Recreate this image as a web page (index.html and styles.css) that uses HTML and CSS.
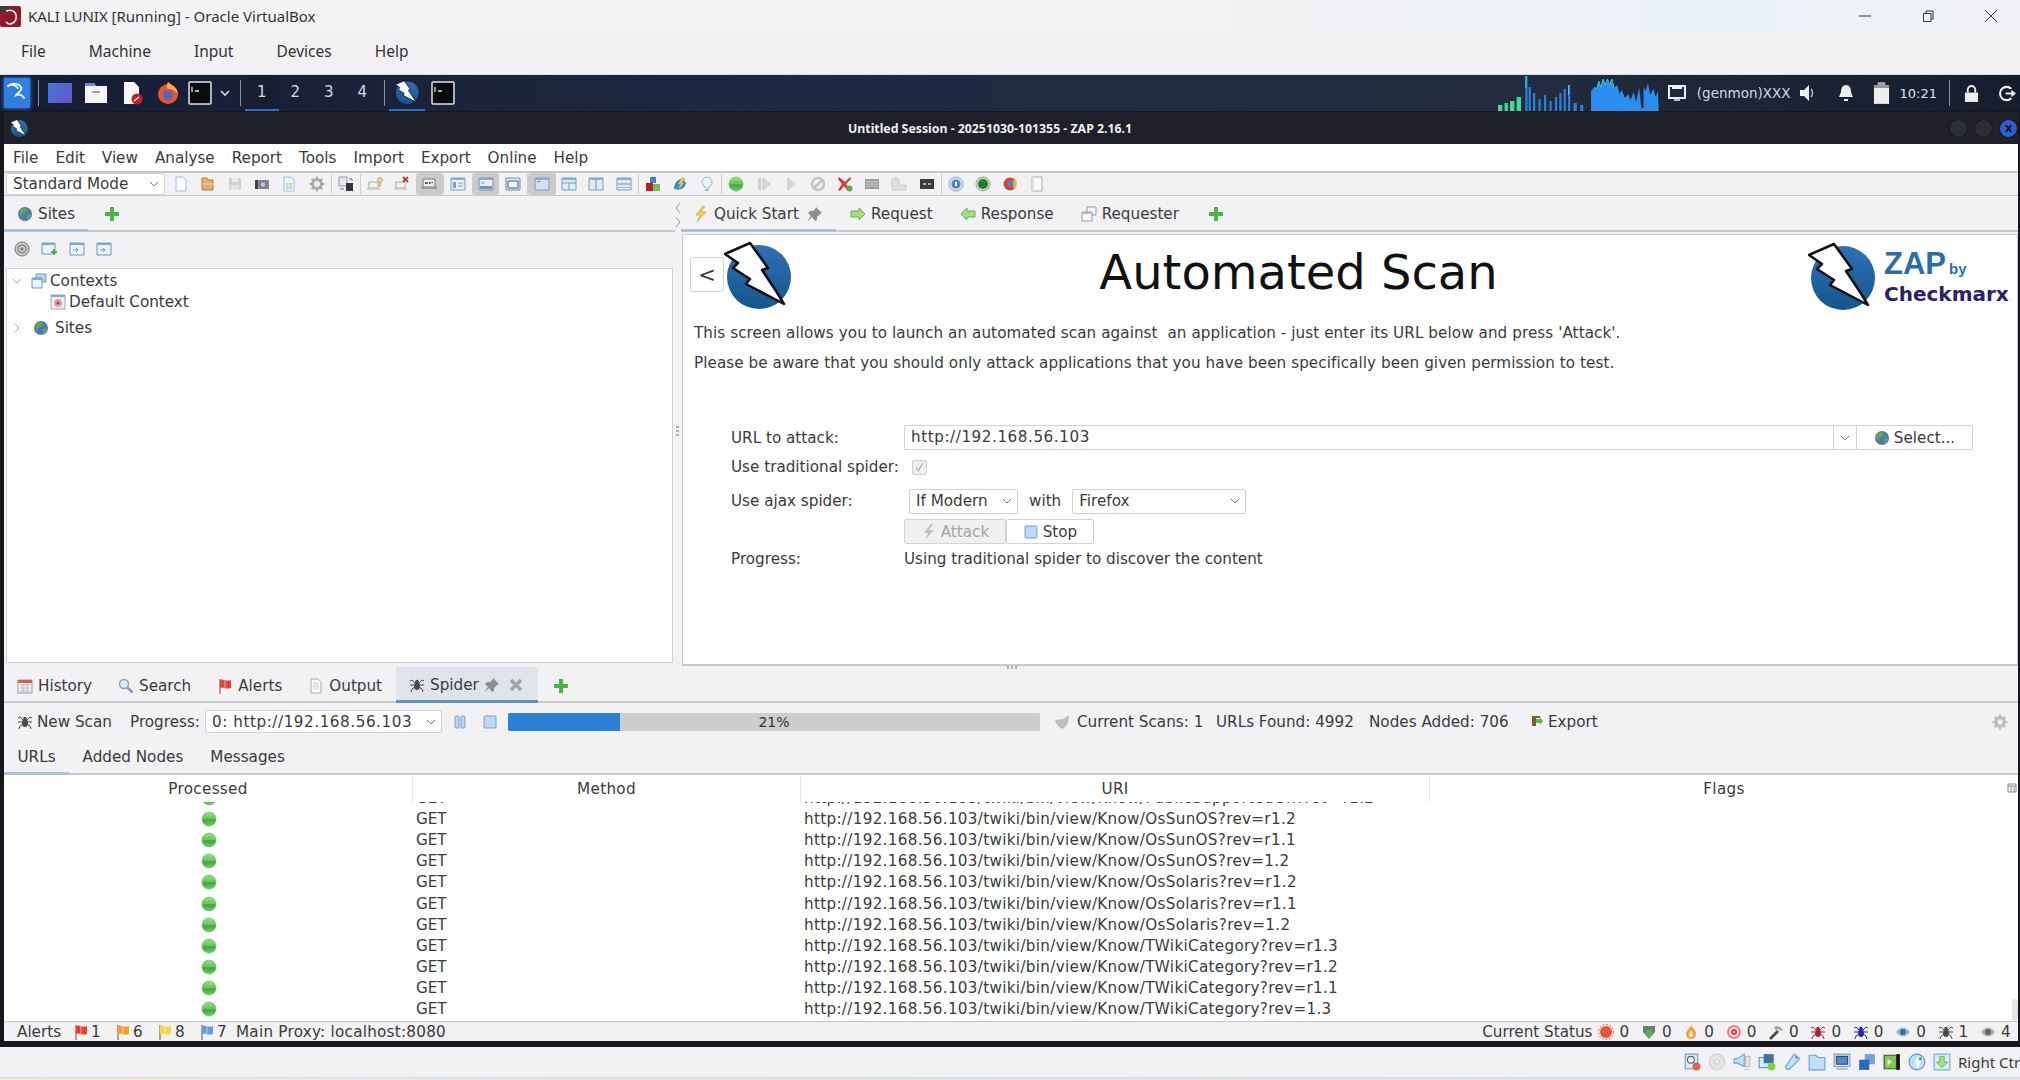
FILE: index.html
```html
<!DOCTYPE html>
<html lang="en">
<head>
<meta charset="UTF-8">
<title>KALI LUNIX [Running] - Oracle VirtualBox</title>
<link rel="stylesheet" href="styles.css">
</head>
<body>
<!-- icon sheet -->
<svg class="sheet" xmlns="http://www.w3.org/2000/svg">
  <defs>
    <linearGradient id="gDot" x1="0" y1="0" x2="0" y2="1"><stop offset="0" stop-color="#9be08a"/><stop offset=".5" stop-color="#62c455"/><stop offset=".55" stop-color="#3fa63c"/><stop offset="1" stop-color="#6fd064"/></linearGradient>
    <linearGradient id="gZap" x1="0" y1="0" x2="0" y2="1"><stop offset="0" stop-color="#2f6fb4"/><stop offset="1" stop-color="#14568f"/></linearGradient>
  </defs>
  <symbol id="globe" viewBox="0 0 16 16"><circle cx="8" cy="8" r="7" fill="#4f79b5"/><path d="M4 3l4-1 2 2-2 3-3 1-1 3-2-3zM10 9l3-1 1 2-3 4-1-2z" fill="#5ea94f"/></symbol>
  <symbol id="plus" viewBox="0 0 16 16"><path d="M6 1h4v5h5v4h-5v5H6v-5H1V6h5z" fill="#4cb53f"/></symbol>
  <symbol id="page" viewBox="0 0 16 16"><path d="M3 1h7l3 3v11H3z" fill="#fff" stroke="#9dbbdc"/></symbol>
  <symbol id="folder" viewBox="0 0 16 16"><path d="M2 2h5l1 2h5v10H2z" fill="#e6ad6e" stroke="#b97a3a"/><path d="M2 8h12" stroke="#f5cf9f"/></symbol>
  <symbol id="save" viewBox="0 0 16 16"><path d="M2 2h12v12H2z" fill="#cfcfcf"/><path d="M5 2h6v4H5z" fill="#eee"/><path d="M4 9h8v5H4z" fill="#e3e3e3"/></symbol>
  <symbol id="camera" viewBox="0 0 16 16"><path d="M1 4h14v9H1z" fill="#8a8a8e"/><path d="M1 4h3v9H1z" fill="#444"/><circle cx="9" cy="8.500" r="3.200" fill="#b9c2db" stroke="#5a5f78"/></symbol>
  <symbol id="sheetdoc" viewBox="0 0 16 16"><path d="M3 1h7l3 3v11H3z" fill="#eef6fb" stroke="#9dbbdc"/><path d="M5 7h6v6H5z" fill="#a9d3a3"/><path d="M5 9h6M5 11h6M8 7v6" stroke="#fff" stroke-width=".6"/></symbol>
  <symbol id="gear" viewBox="0 0 16 16"><circle cx="8" cy="8" r="4.500" fill="none" stroke="#a9a9a9" stroke-width="3"/><path d="M8 .5v15M.5 8h15M2.700 2.700l10.600 10.600M13.300 2.700L2.700 13.300" stroke="#a9a9a9" stroke-width="2"/><circle cx="8" cy="8" r="3" fill="#eee"/></symbol>
  <symbol id="compare" viewBox="0 0 16 16"><path d="M1 1h8v9H1z" fill="#e8e8e8" stroke="#999"/><path d="M8 7h7v8H8z" fill="#333"/><path d="M11 3h3v2M2 13h4" stroke="#4a6fb5" fill="none"/></symbol>
  <symbol id="lapBulb" viewBox="0 0 16 16"><path d="M2 6h9v6H2z" fill="#f2f2f2" stroke="#a8a8a8"/><path d="M0 12h13v2H0z" fill="#cdcdcd"/><circle cx="13" cy="4" r="2.400" fill="#f3dd8a" stroke="#a58d3e" stroke-width=".6"/><path d="M12.500 6h1v5h-1z" fill="#a58d3e"/></symbol>
  <symbol id="lapX" viewBox="0 0 16 16"><path d="M2 6h9v6H2z" fill="#f2f2f2" stroke="#a8a8a8"/><path d="M0 12h13v2H0z" fill="#cdcdcd"/><path d="M9 1l5 5M14 1L9 6" stroke="#c23b3b" stroke-width="2"/></symbol>
  <symbol id="lapOn" viewBox="0 0 16 16"><path d="M2 3h12v8H2z" fill="#eee" stroke="#777"/><path d="M0 11h16v2H0z" fill="#9a9a9a"/><path d="M4 6h3v2H4z" fill="#2f8f3c"/><path d="M8 6h1.500v2H8zM10.500 6H12v1h-1.500z" fill="#444"/></symbol>
  <symbol id="lay1" viewBox="0 0 16 16"><path d="M1 2h14v12H1z" fill="#e8eef5" stroke="#7f9dbd"/><path d="M1 2h14v2H1z" fill="#8fabc9"/><path d="M3 6h3v6H3z" fill="#7f9dbd"/><path d="M8 7h5M8 10h5" stroke="#7f9dbd"/></symbol>
  <symbol id="lay2" viewBox="0 0 16 16"><path d="M1 2h14v12H1z" fill="#e8eef5" stroke="#6f8fb0"/><path d="M1 2h14v2H1z" fill="#8fabc9"/><path d="M2 10h12v3H2z" fill="#6f97c0"/><path d="M3 7h4" stroke="#7f9dbd"/></symbol>
  <symbol id="lay3" viewBox="0 0 16 16"><path d="M1 2h14v12H1z" fill="#dfe8f2" stroke="#6f8fb0"/><path d="M3 5h10v7H3z" fill="#f0f4f8" stroke="#3d6188"/></symbol>
  <symbol id="lay4" viewBox="0 0 16 16"><path d="M1 2h14v12H1z" fill="#cfe2f5" stroke="#7f9dbd"/><path d="M1 2h14v2H1z" fill="#8fabc9"/><path d="M3 5h4v1H3z" fill="#7f9dbd"/></symbol>
  <symbol id="lay5" viewBox="0 0 16 16"><path d="M1 2h14v12H1z" fill="#dcebf8" stroke="#7f9dbd"/><path d="M1 2h14v2H1z" fill="#8fabc9"/><path d="M8 7v7M1 7h14" stroke="#7f9dbd"/></symbol>
  <symbol id="lay6" viewBox="0 0 16 16"><path d="M1 2h14v12H1z" fill="#dcebf8" stroke="#7f9dbd"/><path d="M1 2h14v2H1z" fill="#8fabc9"/><path d="M7 4h2v10H7z" fill="#a7bdd4"/></symbol>
  <symbol id="lay7" viewBox="0 0 16 16"><path d="M1 2h14v12H1z" fill="#dcebf8" stroke="#7f9dbd"/><path d="M1 2h14v2H1z" fill="#8fabc9"/><path d="M1 7h14v2H1zM1 11h14v1H1z" fill="#a7bdd4"/></symbol>
  <symbol id="blocks" viewBox="0 0 16 16"><path d="M5 1h6v6H5z" fill="#3d82b8"/><path d="M1 7h7v8H1z" fill="#b4202c"/><path d="M8 8h7v7H8z" fill="#7cbb52"/></symbol>
  <symbol id="hud" viewBox="0 0 16 16"><path d="M2 13c0-6 4-11 11-11-1 2-1 3 1 5-1 5-5 8-12 6z" fill="#3d8bd0"/><path d="M10 1l3 1-3 5 2 0-5 6 1-5-2 0z" fill="#e6c442"/></symbol>
  <symbol id="bulb" viewBox="0 0 16 16"><path d="M8 1a5 5 0 0 1 3 9l-1 2H6l-1-2a5 5 0 0 1 3-9z" fill="#e9f2fa" stroke="#9fb7cc"/><path d="M6 13h4v2H6z" fill="#b6b6b6"/></symbol>
  <symbol id="dot" viewBox="0 0 16 16"><circle cx="8" cy="8" r="7" fill="url(#gDot)" stroke="#5eb455" stroke-width=".6"/></symbol>
  <symbol id="step" viewBox="0 0 16 16"><path d="M2 2h3v12H2z" fill="#cfcfcf"/><path d="M7 2l7 6-7 6z" fill="#d9d9d9" stroke="#c4c4c4"/></symbol>
  <symbol id="play" viewBox="0 0 16 16"><path d="M4 1l9 7-9 7z" fill="#d4d4d4"/></symbol>
  <symbol id="ban" viewBox="0 0 16 16"><circle cx="8" cy="8" r="6" fill="none" stroke="#c4c4c4" stroke-width="2.500"/><path d="M4 12l8-8" stroke="#c4c4c4" stroke-width="2.500"/></symbol>
  <symbol id="xplus" viewBox="0 0 16 16"><path d="M2 1l6 5 5-5 1 2-5 5 5 6-3 1-4-5-4 5-2-1 4-6-4-5z" fill="#d63a33"/><circle cx="12.500" cy="12.500" r="3" fill="#55b548"/></symbol>
  <symbol id="grid" viewBox="0 0 16 16"><path d="M1 3h14v10H1z" fill="#9c9c9c"/><path d="M3 5v6M5 5v6M7 5v6M9 5v6M11 5v6M13 5v6" stroke="#e8e8e8" stroke-dasharray="1.500 1"/></symbol>
  <symbol id="lockdim" viewBox="0 0 16 16"><path d="M1 3h7v6h7v5H1z" fill="#e0e0e0" stroke="#c9c9c9"/><path d="M3 1h3v2H3z" fill="#d4d4d4"/></symbol>
  <symbol id="darkbox" viewBox="0 0 16 16"><path d="M1 3h14v10H1z" fill="#3c3c3c"/><path d="M4 7h3v2H4zM9 7h3v2H9z" fill="#aaa"/></symbol>
  <symbol id="help" viewBox="0 0 16 16"><circle cx="8" cy="8" r="7" fill="#cfe0f2" stroke="#8aa8c9"/><circle cx="8" cy="8" r="4.500" fill="#4b84c2"/><path d="M7 6h2v4H7z" fill="#fff"/></symbol>
  <symbol id="rec" viewBox="0 0 16 16"><circle cx="8" cy="8" r="7" fill="#cfd3cf" stroke="#9ba09b"/><circle cx="8" cy="8" r="5" fill="#1f7f2a"/></symbol>
  <symbol id="fox" viewBox="0 0 16 16"><circle cx="8" cy="8" r="6.500" fill="#c9492f"/><circle cx="9" cy="8" r="3.500" fill="#5d7fc6"/><path d="M12 1c3 3 3 9 0 13-1-3-1-8 0-13z" fill="#f2b33c"/></symbol>
  <symbol id="note" viewBox="0 0 16 16"><path d="M3 1h10v14H3z" fill="#fafafa" stroke="#a9a9a9"/><path d="M3 1h2v14H3z" fill="#dcdcdc"/></symbol>
  <symbol id="target" viewBox="0 0 16 16"><circle cx="8" cy="8" r="7" fill="#c7c7c7" stroke="#777"/><circle cx="8" cy="8" r="4" fill="none" stroke="#777"/><circle cx="8" cy="8" r="1.500" fill="#777"/></symbol>
  <symbol id="winAdd" viewBox="0 0 16 16"><path d="M1 2h13v11H1z" fill="#eaf2fa" stroke="#6c9ac4"/><path d="M1 2h13v2H1z" fill="#7fa8cf"/><path d="M10 10h2V8h2v2h2v2h-2v2h-2v-2h-2z" fill="#4cb53f"/></symbol>
  <symbol id="winIn" viewBox="0 0 16 16"><path d="M1 2h14v12H1z" fill="#eaf2fa" stroke="#6c9ac4"/><path d="M1 2h14v2H1z" fill="#7fa8cf"/><path d="M4 9h5M7 7l2 2-2 2" stroke="#6c9ac4" fill="none"/></symbol>
  <symbol id="winStack" viewBox="0 0 16 16"><path d="M5 1h10v8H5z" fill="#b9d4ee" stroke="#6c9ac4"/><path d="M1 5h10v10H1z" fill="#eef4fa" stroke="#6c9ac4"/><path d="M1 5h10v2H1z" fill="#7fa8cf"/></symbol>
  <symbol id="winGrey" viewBox="0 0 16 16"><path d="M6 1h9v8H6z" fill="#f4f4f4" stroke="#999"/><path d="M1 6h10v9H1z" fill="#fafafa" stroke="#999"/><path d="M1 6h10v2H1z" fill="#bbb"/></symbol>
  <symbol id="ctxTarget" viewBox="0 0 16 16"><path d="M1 1h14v14H1z" fill="#eef2f6" stroke="#8fa9c4"/><path d="M1 1h14v2H1z" fill="#8fa9c4"/><circle cx="8" cy="9" r="4" fill="#e89aa0"/><circle cx="8" cy="9" r="1.500" fill="#c43c48"/></symbol>
  <symbol id="bolt" viewBox="0 0 16 16"><path d="M10 0L3 9h4l-3 7 9-10H8l4-6z" fill="#f3ce48" stroke="#c89f2a" stroke-width=".6"/></symbol>
  <symbol id="boltOff" viewBox="0 0 16 16"><path d="M10 0L3 9h4l-3 7 9-10H8l4-6z" fill="#bdbdbd"/></symbol>
  <symbol id="pin" viewBox="0 0 16 16"><path d="M9 1l6 6-2 1-3 3 0 3-2 1-3-4-4 4 0-1 3-4-3-3 2-2 3 0 3-3z" fill="#8e8e8e"/></symbol>
  <symbol id="arrowR" viewBox="0 0 16 16"><path d="M1 5h8V2l6 6-6 6v-3H1z" fill="#a5dd85" stroke="#6aae4f"/></symbol>
  <symbol id="arrowL" viewBox="0 0 16 16"><path d="M15 5H7V2L1 8l6 6v-3h8z" fill="#a5dd85" stroke="#6aae4f"/></symbol>
  <symbol id="cal" viewBox="0 0 16 16"><path d="M1 2h14v13H1z" fill="#f3f3f3" stroke="#9a9a9a"/><path d="M1 2h14v3H1z" fill="#d95c4e"/><path d="M3 7h10M3 10h10M3 13h10M6 6v8M10 6v8" stroke="#8cb0d4" stroke-width=".7"/></symbol>
  <symbol id="search" viewBox="0 0 16 16"><circle cx="6" cy="6" r="4.500" fill="#dcebf7" stroke="#8c9fb0" stroke-width="1.400"/><path d="M9.500 9.500l5 5" stroke="#7d91b7" stroke-width="2.400"/></symbol>
  <symbol id="flag" viewBox="0 0 16 16"><path d="M3 1v15" stroke="#a57b52" stroke-width="1.400"/><path d="M3 2c3-2 5 2 11 0v8c-6 2-8-2-11 0z" fill="currentColor"/><path d="M8 2v8" stroke="#fff" stroke-opacity=".35" stroke-width="1.500"/></symbol>
  <symbol id="paper" viewBox="0 0 16 16"><path d="M3 1h7l3 3v11H3z" fill="#fbfbfb" stroke="#aaa"/><path d="M5 5h6M5 7h6M5 9h6M5 11h6" stroke="#ccc"/></symbol>
  <symbol id="spider" viewBox="0 0 16 16"><g stroke="currentColor" stroke-width="1" fill="none"><path d="M6 6L3 3 1 4M10 6l3-3 2 1M5 8H1M11 8h4M6 10l-3 2-1 3M10 10l3 2 1 3"/></g><ellipse cx="8" cy="9" rx="3" ry="4" fill="currentColor"/><circle cx="8" cy="4.500" r="1.800" fill="currentColor"/></symbol>
  <symbol id="close" viewBox="0 0 16 16"><path d="M3 3l10 10M13 3L3 13" stroke="#a3a3a3" stroke-width="3.500"/></symbol>
  <symbol id="stopBox" viewBox="0 0 16 16"><rect x="2" y="2" width="12" height="12" rx="1" fill="#bcd8f3" stroke="#7c9fc4"/></symbol>
  <symbol id="pauseBox" viewBox="0 0 16 16"><rect x="3" y="2" width="4" height="12" rx="1" fill="#bcd8f3" stroke="#7c9fc4"/><rect x="9" y="2" width="4" height="12" rx="1" fill="#bcd8f3" stroke="#7c9fc4"/></symbol>
  <symbol id="shield" viewBox="0 0 16 16"><path d="M1 6l8-1 6-4c0 7-2 12-7 14C4 13 2 10 1 6z" fill="#bfbfbf"/></symbol>
  <symbol id="export" viewBox="0 0 16 16"><path d="M4 2h8v2H8v8H4z" fill="#7a5b3a"/><path d="M8 5h4V3l3 4-3 4V9H8z" fill="#58b84a"/></symbol>
  <symbol id="gearDim" viewBox="0 0 16 16"><circle cx="8" cy="8" r="4.500" fill="none" stroke="#bdbdbd" stroke-width="3"/><path d="M8 .5v15M.5 8h15M2.700 2.700l10.600 10.600M13.300 2.700L2.700 13.300" stroke="#bdbdbd" stroke-width="2"/><circle cx="8" cy="8" r="2.500" fill="#f2f1f4"/></symbol>
  <symbol id="burst" viewBox="0 0 16 16"><circle cx="8" cy="8" r="6" fill="#e8543c"/><circle cx="8" cy="8" r="7.500" fill="none" stroke="#f08a77" stroke-dasharray="2 1.500" stroke-width="1.400"/></symbol>
  <symbol id="shieldDown" viewBox="0 0 16 16"><path d="M2 2h12v6l-6 7-6-7z" fill="#777"/><path d="M5 6h6v3h2l-5 5-5-5h2z" fill="#55b548"/></symbol>
  <symbol id="flame" viewBox="0 0 16 16"><path d="M8 1c1 3 5 5 5 9a5 5 0 0 1-10 0c0-3 3-4 5-9z" fill="#f0a03a"/><path d="M8 6c1 2 2 3 2 5a2 2 0 0 1-4 0c0-2 1-3 2-5z" fill="#fbeec5"/></symbol>
  <symbol id="redTarget" viewBox="0 0 16 16"><circle cx="8" cy="8" r="7" fill="#e8838c"/><circle cx="8" cy="8" r="4.800" fill="#f6dadc"/><circle cx="8" cy="8" r="3" fill="#d6404e"/><circle cx="8" cy="8" r="1" fill="#f6dadc"/></symbol>
  <symbol id="hammer" viewBox="0 0 16 16"><path d="M1 14l8-8 2 2-8 8z" fill="#4a4a4a"/><path d="M6 3c3-2 6-1 9 3l-2 1-3-2-2 2z" fill="#a9a9a9"/></symbol>
  <symbol id="eye" viewBox="0 0 16 16"><path d="M1 8c4-6 10-6 14 0-4 6-10 6-14 0z" fill="currentColor" opacity=".45"/><circle cx="8" cy="8" r="3" fill="currentColor"/></symbol>
  <symbol id="vmDisk" viewBox="0 0 16 16"><path d="M2 1h11v13H2z" fill="#dcebf8" stroke="#7f9dbd"/><circle cx="7" cy="6" r="3" fill="#fff" stroke="#3d6188"/><circle cx="12" cy="12" r="3.500" fill="#e8613c"/></symbol>
  <symbol id="vmCd" viewBox="0 0 16 16"><circle cx="8" cy="8" r="7" fill="#e3e3e3" stroke="#d0d0d0"/><circle cx="8" cy="8" r="2" fill="#f5f5f5" stroke="#ccc"/></symbol>
  <symbol id="vmSound" viewBox="0 0 16 16"><path d="M1 5h3l6-4v11L4 9H1z" fill="#c6e2f7" stroke="#6ba5d6"/><path d="M10 14h5v1h-5z" fill="#ccc"/><path d="M11 3h4v9h-4z" fill="#e5e5e5" stroke="#bbb"/></symbol>
  <symbol id="vmNet" viewBox="0 0 16 16"><path d="M1 4h9v9H1z" fill="#dcebf8" stroke="#6c8fb5"/><path d="M5 1h9v8H5z" fill="#3f6ea8"/><circle cx="12" cy="12" r="3.500" fill="#7ed04a"/></symbol>
  <symbol id="vmUsb" viewBox="0 0 16 16"><path d="M10 1l5 4-9 9c-2 2-5-1-3-3z" fill="#bfe0f7" stroke="#6ba5d6"/><path d="M11 3l2 2" stroke="#3d6188"/></symbol>
  <symbol id="vmShare" viewBox="0 0 16 16"><path d="M1 2h6l2 2h6v11H1z" fill="#bde0f8" stroke="#6ba5d6"/></symbol>
  <symbol id="vmScreen" viewBox="0 0 16 16"><path d="M1 1h14v11H1z" fill="#e4eef7" stroke="#7f9dbd"/><path d="M3 3h10v7H3z" fill="#4f8ac4" stroke="#274d78"/><path d="M3 13h10v2H3z" fill="#bbb"/></symbol>
  <symbol id="vmWins" viewBox="0 0 16 16"><path d="M6 1h9v9H6z" fill="#6ea2dc"/><path d="M1 6h9v9H1z" fill="#2e69b5"/></symbol>
  <symbol id="vmRec" viewBox="0 0 16 16"><path d="M1 2h11v12H1z" fill="#7cc653" stroke="#2f5d22"/><path d="M12 1h3v14h-3z" fill="#111"/><path d="M4 5l4 3-4 3z" fill="#e7f3dc"/></symbol>
  <symbol id="vmGlobe" viewBox="0 0 16 16"><circle cx="8" cy="8" r="7" fill="#bde0f8" stroke="#5f9bce"/><path d="M9 3l4 1-2 4-2 6-3-6z" fill="#fff"/><circle cx="11" cy="5" r="1.500" fill="#48a860"/></symbol>
  <symbol id="vmDown" viewBox="0 0 16 16"><path d="M1 1h14v14H1z" fill="#d3ebfa" stroke="#7ab0d8"/><path d="M6 3h4v5h3l-5 5-5-5h3z" fill="#a9e07a" stroke="#5da238" stroke-width=".6"/></symbol>
  <symbol id="term" viewBox="0 0 24 24"><rect x="1" y="1" width="22" height="22" rx="1" fill="#0b0c10" stroke="#e2e2e6" stroke-width="1.500"/><path d="M4 6v5M7 10h4" stroke="#e2e2e6" stroke-width="1.300"/></symbol>
  <symbol id="zapBall" viewBox="0 0 68 68"><circle cx="35" cy="36" r="32" fill="url(#gZap)"/><path d="M1 13L26 2l18 25-6 2 14 21 8 13-38-20 4-5-17-11 5-5z" fill="#fff" stroke="#111" stroke-width="2.500" stroke-linejoin="round"/></symbol>
</svg>

<!-- fenetre VirtualBox -->
<header class="vb-title">
  <svg class="vb-app" viewBox="0 0 20 20"><rect width="20" height="20" rx="2" fill="#8e1a2c"/><path d="M0 0h8v6H0z" fill="#3d3d3d"/><path d="M6 5c6-3 11 2 9 8-2 5-8 5-9 2" fill="none" stroke="#eee" stroke-width="1.500"/></svg>
  <span class="vb-name">KALI LUNIX [Running] - Oracle VirtualBox</span>
  <div class="vb-controls">
    <svg viewBox="0 0 14 14"><path d="M1 7h12" stroke="#333"/></svg>
    <svg viewBox="0 0 14 14"><path d="M2.500 4.500h7.500v8h-7.500zM5 4.500V2h7v8h-2" fill="none" stroke="#333"/></svg>
    <svg viewBox="0 0 14 14"><path d="M1 1l12 12M13 1L1 13" stroke="#333"/></svg>
  </div>
</header>
<nav class="vb-menu">
  <span>File</span><span>Machine</span><span>Input</span><span>Devices</span><span>Help</span>
</nav>

<div class="guest">
  <!-- panneau xfce -->
  <div class="panel">
    <div class="panel-left">
      <div class="kali"><svg viewBox="0 0 24 24"><path d="M3 7c5-4 11-3 13 1 1 3-4 5-5 7 2-1 5-1 8 3M6 5c3 0 6 2 7 4" fill="none" stroke="#e8f2ff" stroke-width="1.800"/></svg></div>
      <i class="pn-sep first"></i>
      <span class="pn-ico desk"></span>
      <svg class="pn-ico" viewBox="0 0 24 24"><path d="M1 5l1-3h8l2 3h11v17H1z" fill="#f4f4f4"/><path d="M1 2h9l2 3H1z" fill="#5e8fd0"/><path d="M8 11h8" stroke="#888" stroke-width="1.500"/></svg>
      <svg class="pn-ico" viewBox="0 0 24 24"><path d="M4 1h10l5 5v17H4z" fill="#f7f7f7"/><circle cx="17" cy="18" r="5.500" fill="#c61f2a"/><path d="M14 20l5-4" stroke="#fff" stroke-width="1.500"/></svg>
      <svg class="pn-ico" viewBox="0 0 24 24"><circle cx="12" cy="13" r="10" fill="#e8562b"/><circle cx="12" cy="14" r="5" fill="#5b5fc7"/><path d="M12 1c3 3 9 5 10 12-3-4-6-5-10-5-2-2-1-5 0-7z" fill="#f6b13a"/></svg>
      <svg class="pn-term launcher"><use href="#term"/></svg>
      <svg class="pn-chev" viewBox="0 0 12 12"><path d="M2 4l4 4 4-4" fill="none" stroke="#d8dbe2" stroke-width="1.600"/></svg>
      <i class="pn-sep"></i>
      <span class="ws on">1</span><span class="ws">2</span><span class="ws">3</span><span class="ws">4</span>
      <i class="pn-sep tight"></i>
      <span class="task on"><svg class="pn-ico"><use href="#zapBall"/></svg></span>
      <span class="task"><svg class="pn-term"><use href="#term"/></svg></span>
    </div>
    <div class="panel-right">
      <svg class="graph" viewBox="0 0 148 36" preserveAspectRatio="none">
        <path d="M0 30h4v6H0zM6 28h3v8H6zM11 26h4v10h-4zM17 22h4v14h-4z" fill="#3ddc97"/>
        <path d="M25 1h2v35h-2zM28 12h2v24h-2zM32 18h2v18h-2zM37 24h2v12h-2zM42 20h2v16h-2zM47 26h2v10h-2zM52 22h2v14h-2zM56 18h2v18h-2zM60 14h2v22h-2zM64 10h2v26h-2zM69 28h3v8h-3zM75 30h3v6h-3z" fill="#2c7fd8"/>
        <path d="M25 1h1v12h-1zM64 10h1v10h-1z" fill="#38d8c8"/>
        <path d="M85 36V16l3-4 2 2 2-8 2 6 2-8 2 6 2-6 2 6 2-6 2 9 3-3 2 9 2-4 3 8 3-4 2 6 3-8 2 10 3-14 2 20h2V12l2 4 2-8 2 12 3-6 2 8 2-6 1 24z" fill="#2b8df0"/>
        <path d="M88 12l2 2 2-8 2 6 2-8 2 6 2-6 2 6 2-6 2 9" fill="none" stroke="#38d8c8" stroke-width=".8"/>
      </svg>
      <svg class="tray-net" viewBox="0 0 18 18"><path d="M1 2h16v12H1z" fill="none" stroke="#eee" stroke-width="2"/><path d="M4 1h10v4H4z" fill="#eee"/><path d="M6 16h6" stroke="#eee" stroke-width="1.500"/></svg>
      <span class="genmon">(genmon)XXX</span>
      <svg class="tray-vol" viewBox="0 0 18 18"><path d="M1 6h4l5-5v16l-5-5H1z" fill="#eee"/><path d="M12 5c2 2 2 6 0 8" fill="none" stroke="#bbb" stroke-width="1.500"/></svg>
      <svg class="tray-bell" viewBox="0 0 18 18"><path d="M9 1c4 0 5 4 5 7l2 5H2l2-5c0-3 1-7 5-7z" fill="#eee"/><path d="M7 15h4v2H7z" fill="#eee"/></svg>
      <svg class="tray-bat" viewBox="0 0 18 24"><path d="M5 0h8v3H5z" fill="#aaa"/><path d="M1 3h16v3H1z" fill="#999"/><path d="M1 6h16v17H1z" fill="#eee"/></svg>
      <span class="clock">10:21</span>
      <i class="pn-sep"></i>
      <svg class="tray-lock" viewBox="0 0 16 18"><path d="M4 8V5a4 4 0 0 1 8 0v3" fill="none" stroke="#eee" stroke-width="2"/><path d="M1 8h14v10H1z" fill="#eee"/></svg>
      <svg class="tray-out" viewBox="0 0 18 18"><path d="M13 4a7 7 0 1 0 0 10" fill="none" stroke="#eee" stroke-width="2.200"/><path d="M7 8h6V5l5 4-5 4v-3H7z" fill="#eee"/></svg>
    </div>
  </div>

  <!-- ZAP -->
  <div class="zap">
    <div class="zap-title">
      <svg class="zap-mini"><use href="#zapBall"/></svg>
      <span class="zap-name">Untitled Session - 20251030-101355 - ZAP 2.16.1</span>
      <div class="zap-btns"><i></i><i></i><i class="shut">x</i></div>
    </div>
    <div class="zap-win">
      <nav class="menubar">
        <span>File</span><span>Edit</span><span>View</span><span>Analyse</span><span>Report</span><span>Tools</span><span>Import</span><span>Export</span><span>Online</span><span>Help</span>
      </nav>
      <div class="toolbar">
        <div class="combo mode">Standard Mode<svg class="chev" viewBox="0 0 10 10"><path d="M1 3l4 4 4-4" fill="none" stroke="#777"/></svg></div>
        <span class="tb"><svg class="ic"><use href="#page"/></svg></span>
        <span class="tb"><svg class="ic"><use href="#folder"/></svg></span>
        <span class="tb"><svg class="ic"><use href="#save"/></svg></span>
        <span class="tb"><svg class="ic"><use href="#camera"/></svg></span>
        <span class="tb"><svg class="ic"><use href="#sheetdoc"/></svg></span>
        <span class="tb"><svg class="ic"><use href="#gear"/></svg></span>
        <i class="tb-sep"></i>
        <span class="tb"><svg class="ic"><use href="#compare"/></svg></span>
        <i class="tb-sep"></i>
        <span class="tb"><svg class="ic"><use href="#lapBulb"/></svg></span>
        <span class="tb"><svg class="ic"><use href="#lapX"/></svg></span>
        <span class="tb sel"><svg class="ic"><use href="#lapOn"/></svg></span>
        <i class="tb-sep"></i>
        <span class="tb"><svg class="ic"><use href="#lay1"/></svg></span>
        <span class="tb sel"><svg class="ic"><use href="#lay2"/></svg></span>
        <span class="tb"><svg class="ic"><use href="#lay3"/></svg></span>
        <i class="tb-sep"></i>
        <span class="tb sel"><svg class="ic"><use href="#lay4"/></svg></span>
        <span class="tb"><svg class="ic"><use href="#lay5"/></svg></span>
        <span class="tb"><svg class="ic"><use href="#lay6"/></svg></span>
        <span class="tb"><svg class="ic"><use href="#lay7"/></svg></span>
        <i class="tb-sep"></i>
        <span class="tb"><svg class="ic"><use href="#blocks"/></svg></span>
        <span class="tb"><svg class="ic"><use href="#hud"/></svg></span>
        <span class="tb"><svg class="ic"><use href="#bulb"/></svg></span>
        <i class="tb-sep"></i>
        <span class="tb"><svg class="ic"><use href="#dot"/></svg></span>
        <span class="tb"><svg class="ic"><use href="#step"/></svg></span>
        <span class="tb"><svg class="ic"><use href="#play"/></svg></span>
        <span class="tb"><svg class="ic"><use href="#ban"/></svg></span>
        <span class="tb"><svg class="ic"><use href="#xplus"/></svg></span>
        <span class="tb"><svg class="ic"><use href="#grid"/></svg></span>
        <span class="tb"><svg class="ic"><use href="#lockdim"/></svg></span>
        <span class="tb"><svg class="ic"><use href="#darkbox"/></svg></span>
        <i class="tb-sep"></i>
        <span class="tb"><svg class="ic"><use href="#help"/></svg></span>
        <span class="tb"><svg class="ic"><use href="#rec"/></svg></span>
        <span class="tb"><svg class="ic"><use href="#fox"/></svg></span>
        <span class="tb"><svg class="ic"><use href="#note"/></svg></span>
      </div>

      <div class="upper">
        <section class="left">
          <div class="tabs">
            <div class="tab sites active"><svg class="ic"><use href="#globe"/></svg>Sites</div>
            <svg class="ic add"><use href="#plus"/></svg>
          </div>
          <div class="site-tools">
            <svg class="ic"><use href="#target"/></svg>
            <svg class="ic"><use href="#winAdd"/></svg>
            <svg class="ic"><use href="#winIn"/></svg>
            <svg class="ic"><use href="#winIn"/></svg>
          </div>
          <div class="tree">
            <div class="node ctx"><svg class="twist" viewBox="0 0 10 10"><path d="M1 3l4 4 4-4" fill="none" stroke="#aaa"/></svg><svg class="ic"><use href="#winStack"/></svg>Contexts</div>
            <div class="node child"><svg class="ic"><use href="#ctxTarget"/></svg>Default Context</div>
            <div class="node top"><svg class="twist" viewBox="0 0 10 10"><path d="M3 1l4 4-4 4" fill="none" stroke="#aaa"/></svg><svg class="ic"><use href="#globe"/></svg>Sites</div>
          </div>
        </section>
        <div class="vsplit">
          <svg viewBox="0 0 8 26"><path d="M6 1L2 6l4 5M2 15l4 5-4 5" fill="none" stroke="#999"/></svg>
          <span class="grip-v"></span>
        </div>
        <section class="right">
          <div class="tabs">
            <div class="tab quick active"><svg class="ic"><use href="#bolt"/></svg>Quick Start<svg class="ic pin"><use href="#pin"/></svg></div>
            <div class="tab"><svg class="ic"><use href="#arrowR"/></svg>Request</div>
            <div class="tab"><svg class="ic"><use href="#arrowL"/></svg>Response</div>
            <div class="tab"><svg class="ic"><use href="#winGrey"/></svg>Requester</div>
            <svg class="ic add"><use href="#plus"/></svg>
          </div>
          <div class="scan">
            <div class="scan-head">
              <button class="back">&lt;</button>
              <svg class="logo"><use href="#zapBall"/></svg>
              <h1>Automated Scan</h1>
              <div class="brand">
                <svg class="logo"><use href="#zapBall"/></svg>
                <div class="brand-text">
                  <div class="brand-zap">ZAP<small>by</small></div>
                  <div class="brand-cx">Checkmarx</div>
                </div>
              </div>
            </div>
            <p class="intro">This screen allows you to launch an automated scan against&nbsp; an application - just enter its URL below and press 'Attack'.</p>
            <p class="intro">Please be aware that you should only attack applications that you have been specifically been given permission to test.</p>
            <div class="form">
              <label class="r1">URL to attack:</label>
              <div class="r1 url-row">
                <div class="field">http://192.168.56.103</div>
                <div class="field-drop"><svg class="chev" viewBox="0 0 10 10"><path d="M1 3l4 4 4-4" fill="none" stroke="#777"/></svg></div>
                <button class="btn select"><svg class="ic"><use href="#globe"/></svg>Select...</button>
              </div>
              <label class="r2">Use traditional spider:</label>
              <div class="r2"><span class="check"><svg viewBox="0 0 12 12"><path d="M3 6l2 3 4-7" fill="none" stroke="#aaa"/></svg></span></div>
              <label class="r3">Use ajax spider:</label>
              <div class="r3 ajax-row">
                <div class="combo modern">If Modern<svg class="chev" viewBox="0 0 10 10"><path d="M1 3l4 4 4-4" fill="none" stroke="#777"/></svg></div>
                <span class="with">with</span>
                <div class="combo browser">Firefox<svg class="chev" viewBox="0 0 10 10"><path d="M1 3l4 4 4-4" fill="none" stroke="#777"/></svg></div>
              </div>
              <div class="r4 gap"></div>
              <div class="r4 btn-row">
                <button class="btn attack"><svg class="ic"><use href="#boltOff"/></svg>Attack</button>
                <button class="btn stop"><svg class="ic"><use href="#stopBox"/></svg>Stop</button>
              </div>
              <label class="r5">Progress:</label>
              <div class="r5">Using traditional spider to discover the content</div>
            </div>
          </div>
        </section>
      </div>

      <section class="lower">
        <span class="grip-h"></span>
        <div class="tabs low-tabs">
          <div class="tab"><svg class="ic"><use href="#cal"/></svg>History</div>
          <div class="tab"><svg class="ic"><use href="#search"/></svg>Search</div>
          <div class="tab"><svg class="ic flag-red"><use href="#flag"/></svg>Alerts</div>
          <div class="tab"><svg class="ic"><use href="#paper"/></svg>Output</div>
          <div class="tab spider-tab"><svg class="ic spi"><use href="#spider"/></svg>Spider<svg class="ic pin"><use href="#pin"/></svg><svg class="ic shut"><use href="#close"/></svg></div>
          <svg class="ic add"><use href="#plus"/></svg>
        </div>
        <div class="scanbar">
          <span class="newscan"><svg class="ic spi"><use href="#spider"/></svg>New Scan</span>
          <span class="prog-label">Progress:</span>
          <div class="combo target">0: http://192.168.56.103<svg class="chev" viewBox="0 0 10 10"><path d="M1 3l4 4 4-4" fill="none" stroke="#777"/></svg></div>
          <svg class="ic pause"><use href="#pauseBox"/></svg>
          <svg class="ic halt"><use href="#stopBox"/></svg>
          <div class="bar"><div class="bar-fill" style="width: 21%;"></div><span>21%</span></div>
          <svg class="ic shieldic"><use href="#shield"/></svg>
          <span class="stat s1">Current Scans: 1</span>
          <span class="stat s2">URLs Found: 4992</span>
          <span class="stat s3">Nodes Added: 706</span>
          <svg class="ic exp"><use href="#export"/></svg>
          <span class="stat">Export</span>
          <svg class="ic cog"><use href="#gearDim"/></svg>
        </div>
        <div class="subtabs">
          <div class="sub active">URLs</div>
          <div class="sub">Added Nodes</div>
          <div class="sub">Messages</div>
        </div>
        <div class="grid-head">
          <div>Processed</div><div>Method</div><div>URI</div><div>Flags</div>
          <svg class="col-pick" viewBox="0 0 10 10"><path d="M1 1h8v8H1zM1 3h8M4 3v6M7 3v6" fill="none" stroke="#8a8a8a"/></svg>
        </div>
        <div class="grid-scroll">
          <table class="urls">
            <colgroup><col class="c1"><col class="c2"><col class="c3"><col class="c4"></colgroup>
            <tbody>
              <tr><td><svg class="ic"><use href="#dot"/></svg></td><td>GET</td><td>http://192.168.56.103/twiki/bin/view/Know/PublicSupportedOn?rev=r1.2</td><td></td></tr>
              <tr><td><svg class="ic"><use href="#dot"/></svg></td><td>GET</td><td>http://192.168.56.103/twiki/bin/view/Know/OsSunOS?rev=r1.2</td><td></td></tr>
              <tr><td><svg class="ic"><use href="#dot"/></svg></td><td>GET</td><td>http://192.168.56.103/twiki/bin/view/Know/OsSunOS?rev=r1.1</td><td></td></tr>
              <tr><td><svg class="ic"><use href="#dot"/></svg></td><td>GET</td><td>http://192.168.56.103/twiki/bin/view/Know/OsSunOS?rev=1.2</td><td></td></tr>
              <tr><td><svg class="ic"><use href="#dot"/></svg></td><td>GET</td><td>http://192.168.56.103/twiki/bin/view/Know/OsSolaris?rev=r1.2</td><td></td></tr>
              <tr><td><svg class="ic"><use href="#dot"/></svg></td><td>GET</td><td>http://192.168.56.103/twiki/bin/view/Know/OsSolaris?rev=r1.1</td><td></td></tr>
              <tr><td><svg class="ic"><use href="#dot"/></svg></td><td>GET</td><td>http://192.168.56.103/twiki/bin/view/Know/OsSolaris?rev=1.2</td><td></td></tr>
              <tr><td><svg class="ic"><use href="#dot"/></svg></td><td>GET</td><td>http://192.168.56.103/twiki/bin/view/Know/TWikiCategory?rev=r1.3</td><td></td></tr>
              <tr><td><svg class="ic"><use href="#dot"/></svg></td><td>GET</td><td>http://192.168.56.103/twiki/bin/view/Know/TWikiCategory?rev=r1.2</td><td></td></tr>
              <tr><td><svg class="ic"><use href="#dot"/></svg></td><td>GET</td><td>http://192.168.56.103/twiki/bin/view/Know/TWikiCategory?rev=r1.1</td><td></td></tr>
              <tr><td><svg class="ic"><use href="#dot"/></svg></td><td>GET</td><td>http://192.168.56.103/twiki/bin/view/Know/TWikiCategory?rev=1.3</td><td></td></tr>
            </tbody>
          </table>
          <div class="scrollthumb"></div>
        </div>
      </section>

      <footer class="statusbar">
        <div class="st-left">
          <span class="st-alerts">Alerts</span>
          <span class="st-flag"><svg class="ic flag-red"><use href="#flag"/></svg>1</span>
          <span class="st-flag"><svg class="ic flag-orange"><use href="#flag"/></svg>6</span>
          <span class="st-flag"><svg class="ic flag-yellow"><use href="#flag"/></svg>8</span>
          <span class="st-flag"><svg class="ic flag-blue"><use href="#flag"/></svg>7</span>
          <span class="st-proxy">Main Proxy: localhost:8080</span>
        </div>
        <div class="st-right">
          <span class="st-cur">Current Status</span>
          <span class="st-i"><svg class="ic"><use href="#burst"/></svg>0</span>
          <span class="st-i"><svg class="ic"><use href="#shieldDown"/></svg>0</span>
          <span class="st-i"><svg class="ic"><use href="#flame"/></svg>0</span>
          <span class="st-i"><svg class="ic"><use href="#redTarget"/></svg>0</span>
          <span class="st-i"><svg class="ic"><use href="#hammer"/></svg>0</span>
          <span class="st-i"><svg class="ic sp-red"><use href="#spider"/></svg>0</span>
          <span class="st-i"><svg class="ic sp-blue"><use href="#spider"/></svg>0</span>
          <span class="st-i"><svg class="ic eye-blue"><use href="#eye"/></svg>0</span>
          <span class="st-i"><svg class="ic spi"><use href="#spider"/></svg>1</span>
          <span class="st-i last"><svg class="ic eye-gray"><use href="#eye"/></svg>4</span>
        </div>
      </footer>
    </div>
  </div>
</div>

<!-- barre d'etat VirtualBox -->
<footer class="vb-status">
  <svg class="vi"><use href="#vmDisk"/></svg>
  <svg class="vi"><use href="#vmCd"/></svg>
  <svg class="vi"><use href="#vmSound"/></svg>
  <svg class="vi"><use href="#vmNet"/></svg>
  <svg class="vi"><use href="#vmUsb"/></svg>
  <svg class="vi"><use href="#vmShare"/></svg>
  <svg class="vi"><use href="#vmScreen"/></svg>
  <svg class="vi"><use href="#vmWins"/></svg>
  <svg class="vi"><use href="#vmRec"/></svg>
  <svg class="vi"><use href="#vmGlobe"/></svg>
  <svg class="vi"><use href="#vmDown"/></svg>
  <span class="hostkey">Right Ctrl</span>
</footer>
<div class="wall"></div>
</body>
</html>
```
FILE: styles.css
```css
/* Base */
*, *::before, *::after {
    box-sizing: border-box;
    margin: 0;
    padding: 0;
}

html, body {
    width: 2020px;
    height: 1080px;
    overflow: hidden;
}

body {
    font-family: "DejaVu Sans", sans-serif;
    font-size: 15.2px;
    color: #3a3a3a;
    background: #f2f1f4;
    display: flex;
    flex-direction: column;
}

.sheet {
    width: 0;
    height: 0;
    position: absolute;
}

.ic {
    width: 16px;
    height: 16px;
    flex: none;
}

button {
    font: inherit;
    color: inherit;
}

/* VirtualBox chrome */
.vb-title {
    height: 32px;
    flex: none;
    display: flex;
    align-items: center;
    background: linear-gradient(90deg, #f3f2f4 60%, #eaf2f7 85%, #f1f2f5);
    font-family: "Noto Sans", sans-serif;
    font-size: 15px;
    color: #333;
}

.vb-app {
    width: 21px;
    height: 21px;
    margin-right: 7px;
}

.vb-controls {
    margin-left: auto;
    display: flex;
    gap: 49px;
    padding-right: 22px;
}

.vb-controls svg {
    width: 14px;
    height: 14px;
}

.vb-menu {
    height: 43px;
    flex: none;
    display: flex;
    align-items: center;
    gap: 43px;
    padding: 0 0 4px 21px;
    font-family: "Noto Sans", sans-serif;
    font-size: 15.500px;
    color: #333;
    border-bottom: 1px solid #dcdcdf;
}

.vb-status {
    height: 30px;
    flex: none;
    display: flex;
    align-items: center;
    padding-left: 1683px;
    gap: 7px;
    font-family: "Noto Sans", sans-serif;
    font-size: 15px;
    white-space: nowrap;
}

.vi {
    width: 18px;
    height: 18px;
    flex: none;
}

.wall {
    flex: 1;
    background: linear-gradient(90deg, #f3ead2, #dcebe6 30%, #d6e8ee);
    border-top: 1px solid #d8d8d8;
}

/* Guest desktop */
.guest {
    height: 972px;
    flex: none;
    display: flex;
    flex-direction: column;
    background: #16161c;
}

.panel {
    height: 36px;
    flex: none;
    display: flex;
    justify-content: space-between;
    background: linear-gradient(90deg, #151d33, #1f2a42 45%, #222c3e 75%, #161d2c);
    color: #dfe2ea;
}

.panel-left, .panel-right {
    display: flex;
    align-items: center;
}

.kali {
    width: 26px;
    height: 30px;
    margin-left: 4px;
    background: #2f7fe0;
    box-shadow: 0 0 4px #3b8cf0;
}

.kali svg {
    width: 26px;
    height: 28px;
}

.pn-sep {
    width: 1px;
    height: 26px;
    margin: 0 9px;
    background: #8a8f9a;
}

.pn-sep.first {
    margin: 0 8px;
}

.pn-sep.tight {
    margin: 0 4px 0 5px;
}

.pn-ico {
    width: 24px;
    height: 24px;
    margin-right: 12px;
    flex: none;
}

.pn-ico.desk {
    height: 20px;
    background: linear-gradient(135deg, #3c7de0, #6a4fc0);
    margin-left: 1px;
}

.pn-term {
    width: 24px;
    height: 24px;
    flex: none;
}

.pn-term.launcher {
    margin-left: -4px;
}

.pn-chev {
    width: 12px;
    height: 12px;
    margin-left: 7px;
}

.ws {
    width: 33.500px;
    height: 36px;
    line-height: 34px;
    text-align: center;
    font-size: 15px;
    color: #d5d8e0;
}

.ws.on, .task.on {
    border-bottom: 2px solid #2a6fd0;
}

.ws.on {
    background: #171e30;
    margin-left: -5px;
}

.task {
    width: 36px;
    height: 36px;
    display: flex;
    align-items: center;
    justify-content: center;
}

.task .pn-ico {
    margin: 0;
}

.graph {
    width: 162px;
    height: 36px;
}

.tray-net {
    width: 18px;
    height: 18px;
    margin-left: 8px;
}

.genmon {
    margin-left: 11px;
    font-size: 13.500px;
    color: #d5d8e0;
}

.tray-vol {
    width: 18px;
    height: 18px;
    margin-left: 8px;
}

.tray-bell {
    width: 18px;
    height: 18px;
    margin-left: 20px;
}

.tray-bat {
    width: 17px;
    height: 23px;
    margin-left: 18px;
}

.clock {
    margin-left: 10px;
    font-size: 13px;
}

.panel-right .pn-sep {
    margin: 0 14px 0 12px;
}

.tray-lock {
    width: 15px;
    height: 17px;
}

.tray-out {
    width: 17px;
    height: 17px;
    margin: 0 4px 0 20px;
}

/* ZAP frame */
.zap {
    flex: 1;
    display: flex;
    flex-direction: column;
    padding: 1px 2px 6px 4px;
    min-height: 0;
}

.zap-title {
    height: 32px;
    flex: none;
    display: flex;
    align-items: center;
    position: relative;
    background: #1f2029;
    color: #f0f0f0;
}

.zap-mini {
    width: 18px;
    height: 18px;
    margin-left: 6px;
}

.zap-name {
    position: absolute;
    left: 844px;
    font-family: "Noto Sans", sans-serif;
    font-size: 12.300px;
    font-weight: bold;
    white-space: nowrap;
}

.zap-btns {
    margin-left: auto;
    display: flex;
    gap: 6px;
}

.zap-btns i {
    width: 19px;
    height: 19px;
    border-radius: 50%;
    background: #2b2d39;
    border: 1px solid #15151b;
}

.zap-btns i.shut {
    background: #2a5fd6;
    color: #10131e;
    font: bold 12px/17px "DejaVu Sans", sans-serif;
    text-align: center;
}

.zap-win {
    flex: 1;
    min-height: 0;
    display: flex;
    flex-direction: column;
    background: #f2f1f4;
}

/* Menu + toolbar */
.menubar {
    height: 27px;
    flex: none;
    display: flex;
    align-items: center;
    gap: 17px;
    padding-left: 9px;
    background: #fff;
}

.toolbar {
    height: 25px;
    flex: none;
    display: flex;
    align-items: center;
    padding-left: 2px;
    border-top: 2px solid #c6c6c8;
    border-bottom: 1px solid #c6c6c8;
}

.combo {
    display: flex;
    align-items: center;
    justify-content: space-between;
    background: #fff;
    border: 1px solid #d2d2d4;
    border-radius: 2px;
    padding: 0 5px 0 6px;
    white-space: nowrap;
}

.chev {
    width: 10px;
    height: 10px;
    flex: none;
}

.mode {
    width: 159px;
    height: 22px;
    margin-right: 2px;
}

.tb {
    width: 27.200px;
    height: 22px;
    display: flex;
    align-items: center;
    justify-content: center;
    flex: none;
}

.tb.sel {
    background: #cbcbcd;
    border-radius: 3px;
}

.tb-sep {
    width: 1px;
    height: 20px;
    margin: 0 .5px;
    background: #cfcfd1;
    flex: none;
}

/* Upper panes */
.upper {
    height: 470px;
    flex: none;
    display: flex;
}

.left {
    width: 671px;
    display: flex;
    flex-direction: column;
}

.vsplit {
    width: 6px;
    position: relative;
}

.vsplit svg {
    display: block;
    width: 8px;
    height: 26px;
    margin: 6px 0 0 -1px;
}

.grip-v {
    position: absolute;
    left: 1px;
    top: 230px;
    width: 3px;
    height: 12px;
    background: repeating-linear-gradient(180deg, #b0b0b2 0 2px, transparent 2px 4px);
}

.grip-h {
    position: absolute;
    left: 1003px;
    top: 0;
    width: 12px;
    height: 3px;
    background: repeating-linear-gradient(90deg, #b0b0b2 0 2px, transparent 2px 4px);
}

.right {
    flex: 1;
    min-width: 0;
    display: flex;
    flex-direction: column;
}

.tabs {
    height: 36px;
    flex: none;
    display: flex;
    align-items: center;
    border-bottom: 2px solid #c9c9cc;
}

.tab {
    height: 34px;
    display: flex;
    align-items: center;
    gap: 5px;
    padding-top: 2px;
    white-space: nowrap;
}

.add {
    margin-top: 2px;
}

.left .tab.sites {
    width: 84px;
    padding-left: 13px;
    border-bottom: 3px solid #a9c2da;
    margin-bottom: -2px;
    height: 36px;
}

.left .add {
    margin-left: 16px;
}

.site-tools {
    height: 36px;
    flex: none;
    display: flex;
    align-items: center;
    gap: 11.400px;
    padding: 0 0 3px 10px;
}

.tree {
    flex: 1;
    margin: 0 2px 3px 2px;
    background: #fff;
    border: 1px solid #cfcfd2;
    padding-top: 1px;
}

.node {
    display: flex;
    align-items: center;
    gap: 3px;
    height: 21px;
    white-space: nowrap;
}

.twist {
    width: 10px;
    height: 10px;
    margin: 0 6px 0 5px;
}

.node.child {
    padding-left: 43px;
}

.node.top {
    margin-top: 5px;
}

.node.top .ic {
    margin: 0 3px 0 2px;
}

.right .tabs {
    padding-left: 12px;
}

.right .tab {
    margin-right: 27px;
}

.tab.quick {
    width: 155px;
    margin-left: -12px;
    padding-left: 12px;
    height: 36px;
    margin-bottom: -2px;
    border-bottom: 3px solid #a9c2da;
}

.right .tab.quick {
    margin-right: 14px;
}

.tab.quick .pin {
    margin-left: 3px;
}

.right .tabs .add {
    margin-left: 2px;
}

.scan {
    flex: 1;
    margin: 2px 0 0 1px;
    background: #fff;
    border: 1px solid #c9c9cc;
    border-bottom-width: 2px;
    min-height: 0;
}

.scan-head {
    height: 83px;
    display: flex;
    align-items: center;
    padding: 0 0 0 7px;
}

.back {
    width: 34px;
    height: 35px;
    background: #fff;
    border: 1px solid #d6d6d8;
    border-radius: 2px;
    font-size: 21px;
    margin-top: -4px;
}

.logo {
    width: 68px;
    height: 68px;
    flex: none;
}

.scan-head > .logo {
    margin: -3px 0 0 0;
}

h1 {
    flex: 1;
    text-align: center;
    font-size: 48px;
    font-weight: normal;
    color: #111;
    line-height: 1;
    margin: -9px 3px 0 0;
}

.brand {
    display: flex;
    align-items: center;
    width: 209px;
    margin-top: -1px;
}

.brand-text {
    margin-left: 8px;
}

.brand-zap {
    font-family: "Liberation Sans", sans-serif;
    font-weight: bold;
    font-size: 31px;
    line-height: 30px;
    color: #2a6ea8;
}

.brand-zap small {
    font-size: 15px;
    margin-left: 3px;
}

.brand-cx {
    font-weight: bold;
    font-size: 20px;
    line-height: 20px;
    color: #2b2068;
}

.intro {
    padding-left: 11px;
    line-height: 30px;
    letter-spacing: .07px;
    white-space: nowrap;
}

.intro + .intro {
    margin-bottom: 47px;
}

/* Scan form */
.form {
    display: grid;
    grid-template-columns: 173px 1fr;
    grid-template-rows: 25px 34px 34px 26px 30px;
    align-items: center;
    padding: 0 44px 0 48px;
}

.form label {
    white-space: nowrap;
}

.url-row {
    display: flex;
    height: 25px;
}

.field {
    flex: 1;
    background: #fff;
    border: 1px solid #d2d2d4;
    border-right: 0;
    border-radius: 2px 0 0 2px;
    padding-left: 6px;
    line-height: 23px;
    letter-spacing: .55px;
}

.field-drop {
    width: 24px;
    display: flex;
    align-items: center;
    justify-content: center;
    background: #fff;
    border: 1px solid #d2d2d4;
}

.btn {
    display: inline-flex;
    align-items: center;
    justify-content: center;
    gap: 4px;
    background: #fff;
    border: 1px solid #d2d2d4;
    border-radius: 2px;
    white-space: nowrap;
}

.select {
    width: 116px;
    border-left: 0;
}

.check {
    display: block;
    width: 15px;
    height: 15px;
    margin-left: 8px;
    background: #eee;
    border: 1px solid #cfcfd1;
    border-radius: 2px;
}

.check svg {
    display: block;
    width: 13px;
    height: 13px;
}

.ajax-row {
    display: flex;
    align-items: center;
    padding-left: 5px;
}

.modern {
    width: 109px;
    height: 25px;
}

.with {
    margin: 0 11px;
}

.browser {
    width: 174px;
    height: 25px;
}

.btn-row {
    display: flex;
    height: 25px;
    align-self: end;
}

.attack {
    width: 102px;
    background: #f0f0f1;
    color: #a4a4a4;
}

.stop {
    width: 88px;
}

/* Lower pane */
.lower {
    flex: 1;
    min-height: 0;
    display: flex;
    flex-direction: column;
    position: relative;
}

.low-tabs {
    height: 37px;
    padding-left: 13px;
}

.low-tabs .tab {
    margin-right: 26px;
    height: 35px;
    padding-top: 4px;
}

.low-tabs .spider-tab {
    margin: 0 0 -2px -12px;
    height: 36px;
    width: 142px;
    padding-left: 13px;
    background: #dfe3ea;
    border-bottom: 3px solid #5d92bd;
}

.spider-tab .shut {
    margin-left: 3px;
}

.low-tabs .add {
    margin: 4px 0 0 15px;
}

.spi {
    color: #4a4a4a;
}

.flag-red { color: #e34234; }
.flag-orange { color: #f0a030; }
.flag-yellow { color: #f0d84a; }
.flag-blue { color: #5f9fdc; }

.scanbar {
    height: 37px;
    flex: none;
    display: flex;
    align-items: center;
    padding-left: 13px;
    white-space: nowrap;
}

.newscan {
    display: flex;
    align-items: center;
    gap: 4px;
    width: 113px;
}

.prog-label {
    width: 75px;
}

.target {
    width: 237px;
    height: 23px;
    letter-spacing: .55px;
}

.pause {
    margin-left: 10px;
}

.halt {
    margin-left: 14px;
}

.bar {
    width: 532px;
    height: 18px;
    margin-left: 10px;
    position: relative;
    background: #cdcdcd;
    border-radius: 2px;
    text-align: center;
    font-size: 14px;
    line-height: 18px;
    color: #333;
}

.bar-fill {
    height: 100%;
    background: #2a80d4;
    border-radius: 2px 0 0 2px;
}

.bar span {
    position: absolute;
    left: 0;
    right: 0;
    top: 0;
}

.shieldic {
    margin-left: 14px;
}

.s1 {
    margin-left: 7px;
    width: 139px;
}

.s2 {
    width: 153px;
}

.s3 {
    width: 159px;
}

.exp {
    margin-right: 4px;
}

.cog {
    margin-left: auto;
    margin-right: 10px;
}

.subtabs {
    height: 35px;
    flex: none;
    display: flex;
    border-bottom: 2px solid #c9c9cc;
}

.sub {
    padding: 0 13.500px;
    line-height: 34px;
}

.sub.active {
    height: 35px;
    border-bottom: 3px solid #a9c2da;
}

.grid-head {
    height: 27px;
    flex: none;
    display: grid;
    grid-template-columns: 409px 388px 629px 1fr;
    align-items: center;
    text-align: center;
    background: #fff;
    position: relative;
    box-shadow: 0 1px 0 #e9e9eb;
}

.grid-head > div {
    line-height: 26px;
    letter-spacing: .3px;
    border-right: 1px solid #e4e4e6;
}

.grid-head > div:nth-child(4) {
    border-right: 0;
}

.col-pick {
    position: absolute;
    right: 1px;
    top: 8px;
    width: 10px;
    height: 10px;
}

.grid-scroll {
    flex: 1;
    min-height: 0;
    overflow: hidden;
    background: #fff;
    position: relative;
}

.urls {
    table-layout: fixed;
    border-collapse: collapse;
    width: 2014px;
    margin-top: -15px;
}

.c1 { width: 409px; }
.c2 { width: 388px; }
.c3 { width: 629px; }

.urls td {
    height: 21.200px;
    padding: 0 0 0 3px;
    line-height: 20px;
    white-space: nowrap;
    overflow: hidden;
}

.urls td:nth-child(3) {
    letter-spacing: .31px;
}

.urls td:first-child {
    text-align: center;
    padding: 0;
}

.urls .ic {
    display: block;
    margin: 0 auto;
}

.scrollthumb {
    position: absolute;
    right: 0;
    bottom: 0;
    width: 6px;
    height: 22px;
    background: #e4e4e6;
    border-radius: 3px;
}

/* Status bar */
.statusbar {
    height: 20px;
    flex: none;
    display: flex;
    justify-content: space-between;
    align-items: center;
    border-top: 1px solid #c6c6c8;
    white-space: nowrap;
}

.st-left, .st-right, .st-flag, .st-i {
    display: flex;
    align-items: center;
}

.st-alerts {
    margin-left: 13px;
    width: 56px;
}

.st-flag {
    gap: 2px;
    width: 42px;
}

.st-proxy {
    margin-left: -5px;
    letter-spacing: .25px;
}

.st-cur {
    margin-right: 6px;
}

.st-i {
    width: 42.400px;
    gap: 5px;
}

.st-i.last {
    width: 38px;
}

.sp-red { color: #b81e2c; }
.sp-blue { color: #2a2aa8; }
.eye-blue { color: #3a6ea8; }
.eye-gray { color: #666; }
```
